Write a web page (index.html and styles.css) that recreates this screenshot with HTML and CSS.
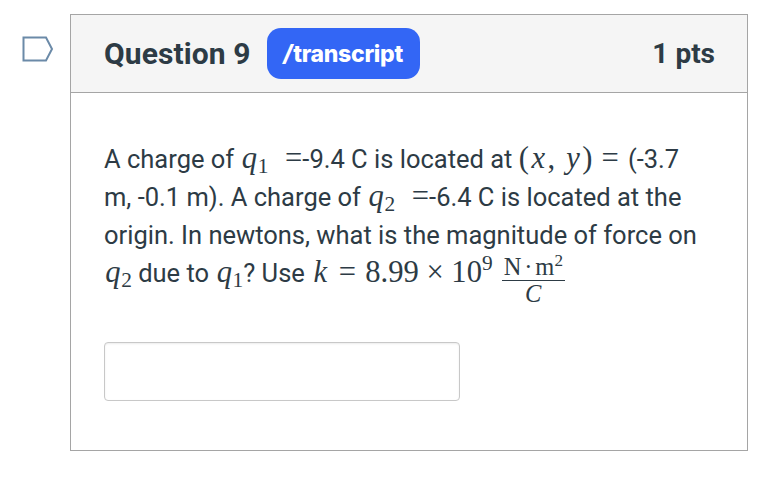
FILE: index.html
```html
<!DOCTYPE html>
<html>
<head>
<meta charset="utf-8">
<link rel="stylesheet" href="styles.css">
</head>
<body>
<div class="page">
  <div class="flag">
    <svg width="32" height="26" viewBox="0 0 32 26"><path d="M1.5 1.5 H24 L30 13 L24 24.5 H1.5 Z" fill="#fff" stroke="#6b8aa8" stroke-width="2" stroke-linejoin="miter"/></svg>
  </div>
  <div class="card">
    <div class="head">
      <div class="title">Question 9</div>
      <div class="badge"><span class="slash">/</span>transcript</div>
      <div class="pts">1 pts</div>
    </div>
    <div class="body">
      <p class="q">A charge of <span class="m"><i class="qv">q</i><sub>1</sub></span> <span class="m eq">=</span>-9.4 C is located at <span class="m">(<i>x</i>,<span class="thin"></span><i>y</i>)<span class="rel">=</span></span>(-3.7<br>m, -0.1 m). A charge of <span class="m"><i class="qv">q</i><sub>2</sub></span> <span class="m eq">=</span>-6.4 C is located at the<br>origin. In newtons, what is the magnitude of force on<br><span class="m"><i class="qv">q</i><sub>2</sub></span> due to <span class="m"><i class="qv">q</i><sub>1</sub></span>? Use <span class="m"><i>k</i><span class="rel">=</span>8.99<span class="bin">×</span>10<sup>9</sup><span class="frac"><span class="num">N<span class="dot">·</span>m<sup>2</sup></span><span class="den"><i>C</i></span></span></span></p>
      <div class="answer"></div>
    </div>
  </div>
</div>
</body>
</html>
```
FILE: styles.css
```css
html, body { margin: 0; padding: 0; background: #fff; }
body { font-family: Roboto, "Liberation Sans", sans-serif; color: #2d3b45; }
.page { display: flex; padding-top: 14px; }
.flag { width: 70px; display: flex; justify-content: flex-start; padding-left: 22px; padding-top: 22px; box-sizing: border-box; }
.flag svg { display: block; }
.card { width: 678px; border: 1px solid #a5a5a5; box-sizing: border-box; height: 437px; display: flex; flex-direction: column; }
.head { height: 78px; background: #f5f5f5; border-bottom: 1px solid #a5a5a5; display: flex; align-items: center; padding: 0 32px 0 33px; box-sizing: border-box; }
.title { font-size: 30px; font-weight: 700; letter-spacing: 0.1px; color: #2d3b45; }
.badge { margin-left: 16px; background: #3366f5; color: #fff; border-radius: 14px; height: 51px; width: 153px; display: flex; align-items: center; justify-content: center; font-family: Inter, Lato, sans-serif; font-weight: 800; font-size: 23px; letter-spacing: -0.3px; box-sizing: border-box; }
.slash { font-style: italic; margin-right: 1px; }
.pts { margin-left: auto; font-size: 28px; font-weight: 700; color: #2d3b45; }
.body { flex: 1; padding: 47px 33px 0 33px; }
.q { margin: 0; font-size: 25.5px; line-height: 38px; white-space: nowrap; height: 154px; }
.m { font-family: "Liberation Serif", "DejaVu Serif", serif; font-size: 1.2em; line-height: 1; }
.m i { font-style: italic; padding: 0 0.08em; }
.m i.qv { padding: 0 0.02em 0 0.04em; }
.m sub { font-size: 0.7em; font-style: normal; vertical-align: -0.25em; line-height: 0; }
.m sup { font-size: 0.7em; vertical-align: 0.55em; line-height: 0; }
.eq { padding-left: 0.34em; }
.thin { display: inline-block; width: 0.28em; }
.rel { padding: 0 0.3em; }
.bin { padding: 0 0.25em; }
.frac { display: inline-flex; flex-direction: column; align-items: center; vertical-align: 0.3em; font-size: 0.8em; line-height: 1; margin-left: 9px; }
.num { border-bottom: 1.5px solid #2d3b45; padding: 0 2px 1px; }
.dot { padding: 0 0.12em; }
.num sup { font-size: 0.7em; vertical-align: 0.55em; }
.den { padding-top: 1px; }
.answer { margin-top: 48px; width: 356px; height: 59px; border: 1px solid #c8c8c8; border-radius: 4px; box-sizing: border-box; box-shadow: inset 0 1px 2px rgba(0,0,0,0.08); }
```
